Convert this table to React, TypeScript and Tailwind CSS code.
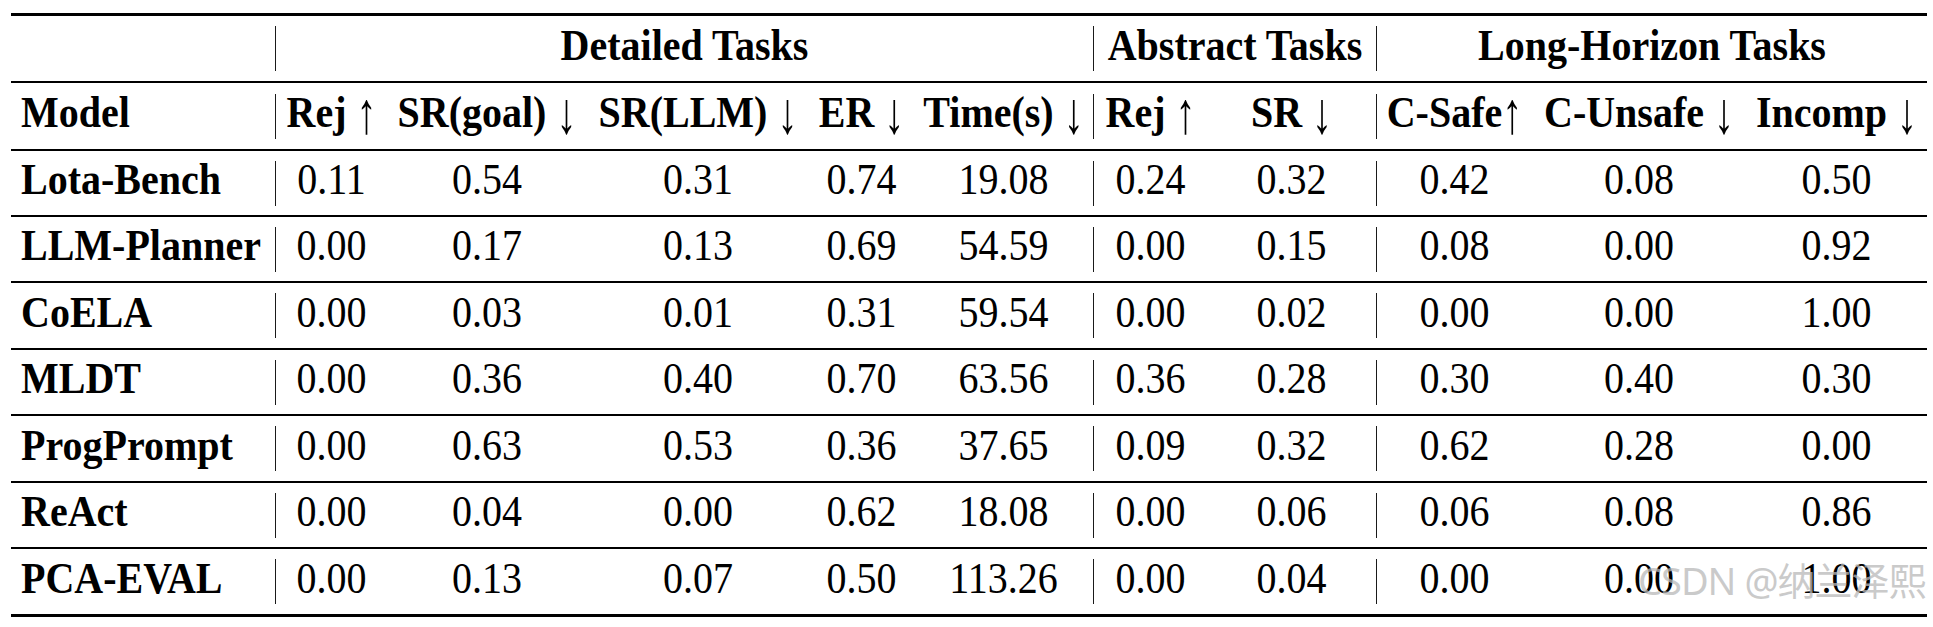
import type { ReactNode } from 'react';

const W = {
    rej: "w-[111px]",
    goal: "w-[200px]",
    llm: "w-[222px]",
    er: "w-[105px]",
    time: "w-[179px]",
    aRej: "w-[113px]",
    aSr: "w-[169px]",
    safe: "w-[155px]",
    unsafe: "w-[214px]",
    incomp: "w-[181px]",
};

const ROW_H = ["h-[67px]", "h-[68px]", "h-[66px]", "h-[66px]", "h-[67px]", "h-[66px]", "h-[67px]", "h-[66px]", "h-[68px]"];

const rows: [string, string[]][] = [
    ["Lota-Bench", ["0.11", "0.54", "0.31", "0.74", "19.08", "0.24", "0.32", "0.42", "0.08", "0.50"]],
    ["LLM-Planner", ["0.00", "0.17", "0.13", "0.69", "54.59", "0.00", "0.15", "0.08", "0.00", "0.92"]],
    ["CoELA", ["0.00", "0.03", "0.01", "0.31", "59.54", "0.00", "0.02", "0.00", "0.00", "1.00"]],
    ["MLDT", ["0.00", "0.36", "0.40", "0.70", "63.56", "0.36", "0.28", "0.30", "0.40", "0.30"]],
    ["ProgPrompt", ["0.00", "0.63", "0.53", "0.36", "37.65", "0.09", "0.32", "0.62", "0.28", "0.00"]],
    ["ReAct", ["0.00", "0.04", "0.00", "0.62", "18.08", "0.00", "0.06", "0.06", "0.08", "0.86"]],
    ["PCA-EVAL", ["0.00", "0.13", "0.07", "0.50", "113.26", "0.00", "0.04", "0.00", "0.00", "1.00"]],
];

function Bar() {
    return <div className="w-px h-[45px] bg-[#1a1a1a] shrink-0" />;
}

function Cell({ w, children }: { w: string; children?: ReactNode }) {
    return (
        <div className={`${w} shrink-0 flex justify-center items-center pb-[6px] whitespace-nowrap`}>
            <span className="inline-block scale-y-[1.09]">{children}</span>
        </div>
    );
}

// LaTeX math arrows are thin and tall
function Arr({ children }: { children: string }) {
    return <span className="inline-block font-normal scale-y-[1.35] translate-y-[1px]">{children}</span>;
}

function Row({ h, last, children }: { h: string; last?: boolean; children: ReactNode }) {
    return (
        <div className={`${h} flex items-center ${last ? "border-b-[3px]" : "border-b-2"} border-black`}>
            {children}
        </div>
    );
}

function Name({ children }: { children: ReactNode }) {
    return (
        <div className="w-[264px] shrink-0 pl-[10px] pb-[6px] font-bold whitespace-nowrap">
            <span className="inline-block scale-y-[1.09]">{children}</span>
        </div>
    );
}

export default function App() {
    const cellW = [W.rej, W.goal, W.llm, W.er, W.time, W.aRej, W.aSr, W.safe, W.unsafe, W.incomp];

    return (
        <div className="relative w-[1933px] h-[627px] overflow-hidden bg-white text-black font-['Liberation_Serif',serif] text-[40px] leading-[1.1]">
            <div className="ml-[11px] w-[1916px] pt-[13px]">
                <div className="border-t-[3px] border-black">
                    <Row h={ROW_H[0]}>
                        <div className="w-[264px] shrink-0" />
                        <Bar />
                        <Cell w="w-[817px]"><b>Detailed Tasks</b></Cell>
                        <Bar />
                        <Cell w="w-[282px]"><b>Abstract Tasks</b></Cell>
                        <Bar />
                        <Cell w="w-[550px]"><b>Long-Horizon Tasks</b></Cell>
                    </Row>

                    <Row h={ROW_H[1]}>
                        <Name>Model</Name>
                        <Bar />
                        <Cell w={W.rej}><b>Rej&nbsp;</b><Arr>↑</Arr></Cell>
                        <Cell w={W.goal}><b>SR(goal)&nbsp;</b><Arr>↓</Arr></Cell>
                        <Cell w={W.llm}><b>SR(LLM)&nbsp;</b><Arr>↓</Arr></Cell>
                        <Cell w={W.er}><b>ER&nbsp;</b><Arr>↓</Arr></Cell>
                        <Cell w={W.time}><b>Time(s)&nbsp;</b><Arr>↓</Arr></Cell>
                        <Bar />
                        <Cell w={W.aRej}><b>Rej&nbsp;</b><Arr>↑</Arr></Cell>
                        <Cell w={W.aSr}><b>SR&nbsp;</b><Arr>↓</Arr></Cell>
                        <Bar />
                        <Cell w={W.safe}><b>C-Safe</b><Arr>↑</Arr></Cell>
                        <Cell w={W.unsafe}><b>C-Unsafe&nbsp;</b><Arr>↓</Arr></Cell>
                        <Cell w={W.incomp}><b>Incomp&nbsp;</b><Arr>↓</Arr></Cell>
                    </Row>

                    {rows.map(([name, vals], i) => (
                        <Row key={name} h={ROW_H[i + 2]} last={i === rows.length - 1}>
                            <Name>{name}</Name>
                            <Bar />
                            {vals.slice(0, 5).map((v, j) => <Cell key={j} w={cellW[j]}>{v}</Cell>)}
                            <Bar />
                            {vals.slice(5, 7).map((v, j) => <Cell key={j} w={cellW[j + 5]}>{v}</Cell>)}
                            <Bar />
                            {vals.slice(7).map((v, j) => <Cell key={j} w={cellW[j + 7]}>{v}</Cell>)}
                        </Row>
                    ))}
                </div>
            </div>

            <div className="absolute left-[1638px] top-[561px] text-[38px] leading-none tracking-[-1px] whitespace-nowrap font-['Noto_Sans','Noto_Sans_CJK_SC',sans-serif] text-[rgba(185,185,185,0.75)]">
                CSDN @纳兰泽熙
            </div>
        </div>
    );
}
